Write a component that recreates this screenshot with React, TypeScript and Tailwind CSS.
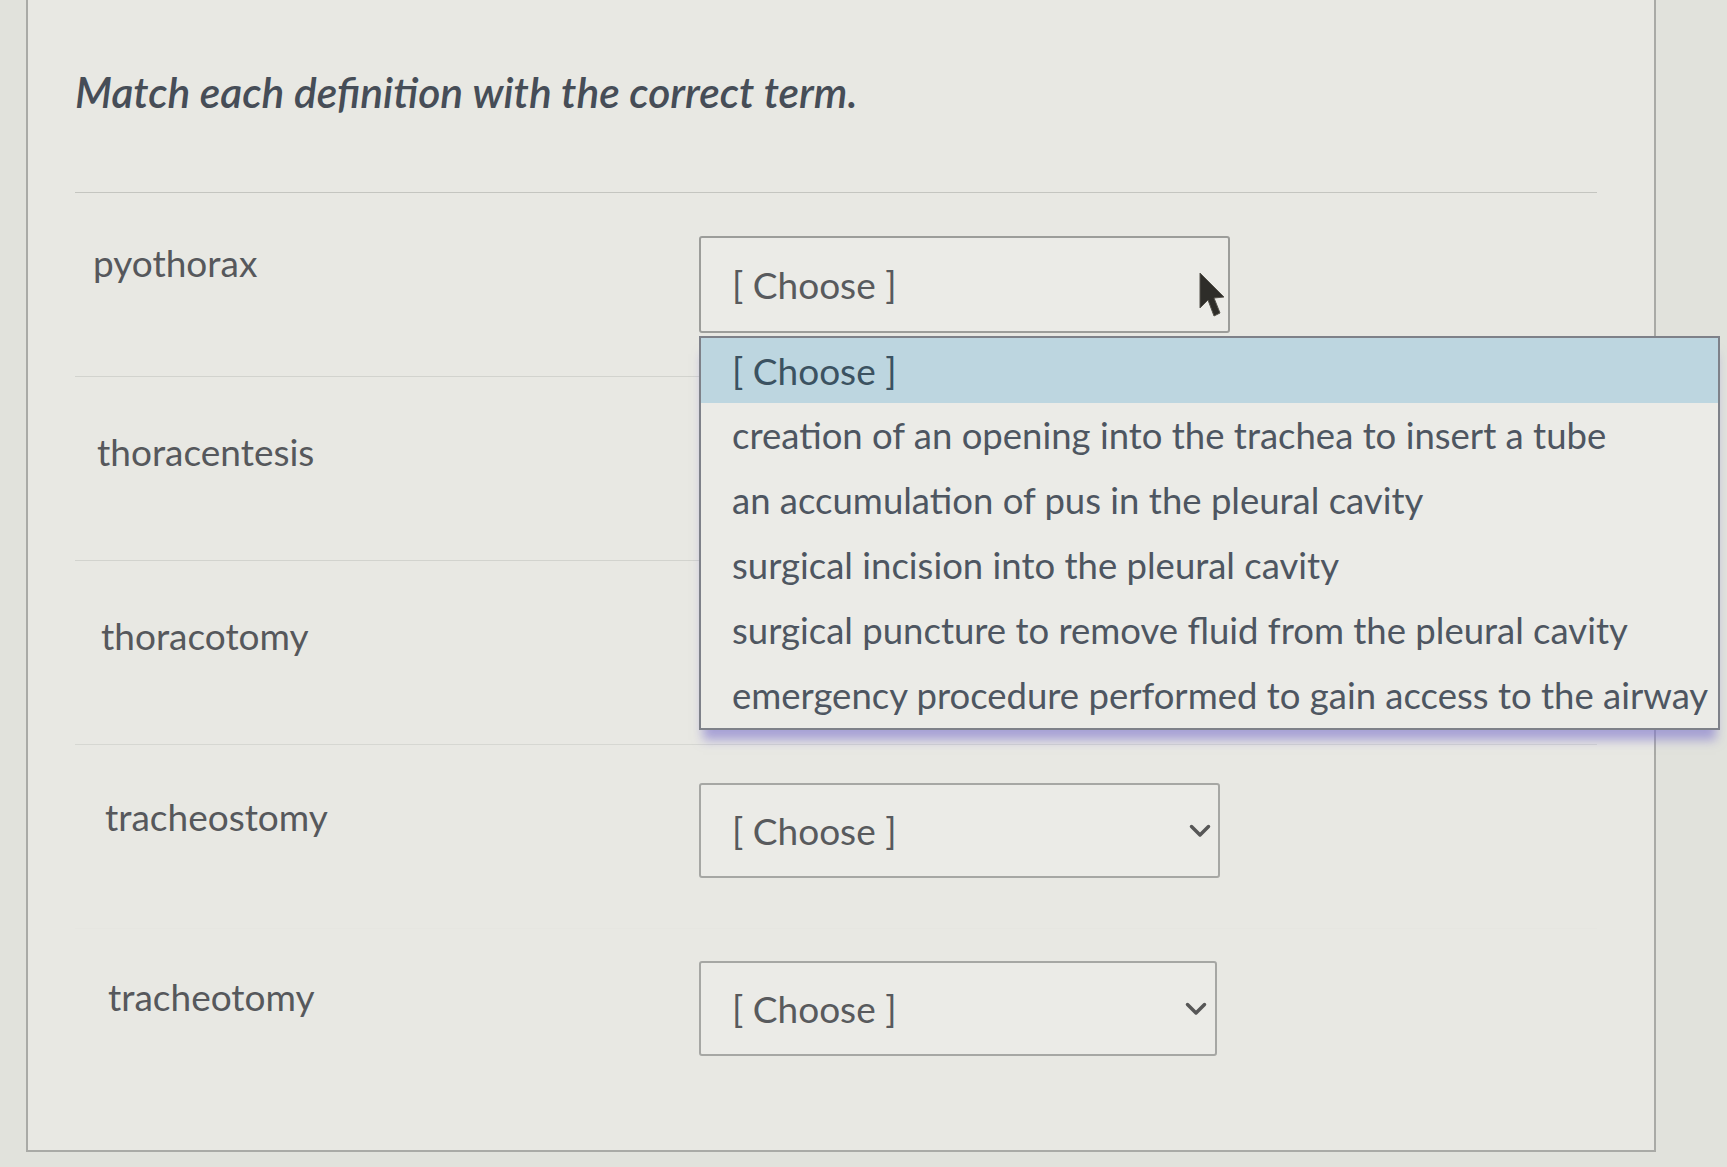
import React from "react";

const font = { fontFamily: "Lato, 'Open Sans', 'Liberation Sans', sans-serif" };

function Chevron() {
  return (
    <svg width="22" height="14" viewBox="0 0 22 14" fill="none">
      <path d="M2.5 2.5 L11 11 L19.5 2.5" stroke="#575757" strokeWidth="3.5" strokeLinecap="round" strokeLinejoin="round" />
    </svg>
  );
}

const options = [
  "creation of an opening into the trachea to insert a tube",
  "an accumulation of pus in the pleural cavity",
  "surgical incision into the pleural cavity",
  "surgical puncture to remove fluid from the pleural cavity",
  "emergency procedure performed to gain access to the airway",
];

export default function App() {
  return (
    <div
      className="relative w-[1727px] h-[1167px] overflow-hidden bg-[#e1e2dc]"
      style={font}
    >
      <div className="ml-[26px] w-[1630px] h-[1152px] border-l-2 border-r-2 border-b-2 border-[#a9aaa6] bg-[#e8e8e3] pl-[47px] pr-[57px]">
        {/* Title */}
        <div className="h-[193px] pt-[66px] border-b border-[#c4c5c0]">
          <h1 className="text-[42.5px] leading-[52px] italic font-semibold text-[#464d57]">
            Match each definition with the correct term.
          </h1>
        </div>

        {/* Row 1 - pyothorax (open) */}
        <div className="h-[184px] flex border-b border-[#d2d3ce]">
          <div className="w-[624px] pl-[18px] pt-[46px] text-[37px] leading-[48px] text-[#56585c]">
            pyothorax
          </div>
          <div className="relative mt-[43px] h-[97px]">
            <div className="w-[531px] h-[97px] border-2 border-[#9c9d9a] rounded-[3px] bg-[#ebebe7] flex items-center pl-[31px] text-[37px] text-[#585a5d]">
              [ Choose ]
            </div>
            <div className="absolute left-0 top-[100px] z-10 w-[1021px] border-2 border-[#7e8189] bg-[#ebebe7] shadow-[0_14px_10px_-4px_rgba(125,115,205,0.6)]">
              <div className="h-[65px] flex items-center pl-[31px] text-[37px] bg-[#bdd6e0] text-[#3b5261]">
                [ Choose ]
              </div>
              {options.map((o) => (
                <div
                  key={o}
                  className="h-[65px] flex items-center pl-[31px] text-[36.5px] text-[#4e5661] whitespace-nowrap"
                >
                  {o}
                </div>
              ))}
            </div>
          </div>
        </div>

        {/* Row 2 */}
        <div className="h-[184px] flex border-b border-[#d2d3ce]">
          <div className="w-[624px] pl-[22px] pt-[51px] text-[37px] leading-[48px] text-[#56585c]">
            thoracentesis
          </div>
        </div>

        {/* Row 3 */}
        <div className="h-[184px] flex border-b border-[#d6d7d2]">
          <div className="w-[624px] pl-[26px] pt-[51px] text-[37px] leading-[48px] text-[#56585c]">
            thoracotomy
          </div>
        </div>

        {/* Row 4 */}
        <div className="h-[184px] flex border-b border-[#e6e6e1]">
          <div className="w-[624px] pl-[30px] pt-[48px] text-[37px] leading-[48px] text-[#56585c]">
            tracheostomy
          </div>
          <div className="mt-[38px]">
            <div className="w-[521px] h-[95px] border-2 border-[#a6a7a4] rounded-[3px] bg-[#ebebe7] flex items-center justify-between pl-[31px] pr-[7px] text-[37px] text-[#585a5d]">
              <span>[ Choose ]</span>
              <Chevron />
            </div>
          </div>
        </div>

        {/* Row 5 */}
        <div className="h-[184px] flex">
          <div className="w-[624px] pl-[33px] pt-[44px] text-[37px] leading-[48px] text-[#56585c]">
            tracheotomy
          </div>
          <div className="mt-[32px]">
            <div className="w-[518px] h-[95px] border-2 border-[#a6a7a4] rounded-[3px] bg-[#ebebe7] flex items-center justify-between pl-[31px] pr-[8px] text-[37px] text-[#585a5d]">
              <span>[ Choose ]</span>
              <Chevron />
            </div>
          </div>
        </div>
      </div>

      {/* mouse cursor */}
      <svg
        className="absolute left-[1197px] top-[270px] z-20"
        width="28"
        height="50"
        viewBox="0 0 28 50"
      >
        <path
          d="M3 3 L3 38 L11 30 L17 46 L23 43 L17 28 L27 27 Z"
          fill="#2e2d29"
          stroke="#55534c"
          strokeWidth="1"
        />
      </svg>
    </div>
  );
}
